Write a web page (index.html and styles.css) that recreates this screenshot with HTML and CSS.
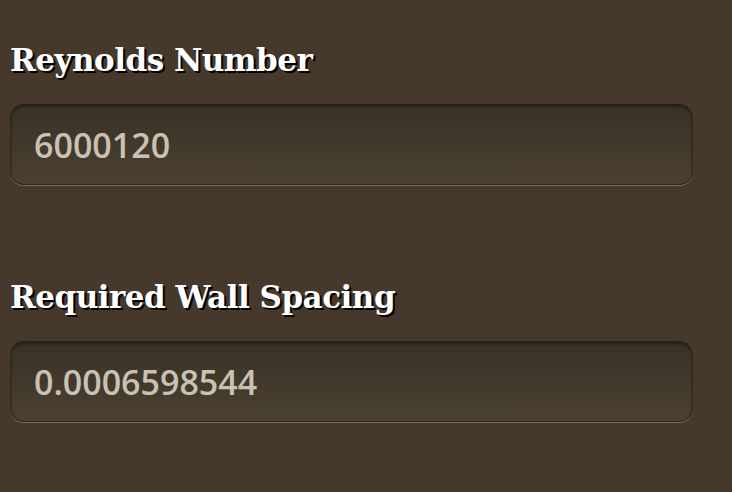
FILE: index.html
```html
<!DOCTYPE html>
<html lang="en">
<head>
    <meta charset="UTF-8">
    <title>Wall Spacing</title>
    <link rel="stylesheet" href="styles.css">
</head>
<body>
    <div class="form">
        <div class="field">
            <label class="field-label" for="re">Reynolds Number</label>
            <input class="field-input" id="re" type="text" value="6000120">
        </div>
        <div class="field">
            <label class="field-label" for="ws">Required Wall Spacing</label>
            <input class="field-input" id="ws" type="text" value="0.0006598544">
        </div>
    </div>
</body>
</html>
```

FILE: styles.css
```css
html, body {
    height: 100%;
}

body {
    margin: 0;
    background: #46392b;
    font-family: 'DejaVu Serif', serif;
}

.form {
    padding: 38px 39px 0 10px;
    display: flex;
    flex-direction: column;
    gap: 90px;
}

.field {
    display: flex;
    flex-direction: column;
    gap: 22px;
}

.field-label {
    color: #fff;
    font-size: 31px;
    font-weight: bold;
    line-height: 44px;
    letter-spacing: -0.5px;
    text-shadow: 2px 2px 0 #000;
}

.field-input {
    box-sizing: border-box;
    width: 100%;
    height: 81px;
    margin: 0;
    padding: 0 23px;
    border: 1px solid #2e271d;
    border-top-color: #262019;
    border-radius: 14px;
    background: linear-gradient(180deg, #393125 0%, #4a4131 100%);
    box-shadow: inset 0 2px 3px rgba(0,0,0,0.35), 0 1px 0 rgba(255,255,255,0.28);
    color: #cac1b5;
    font-family: 'Open Sans', sans-serif;
    font-size: 34px;
    font-weight: 600;
    outline: none;
}
```
